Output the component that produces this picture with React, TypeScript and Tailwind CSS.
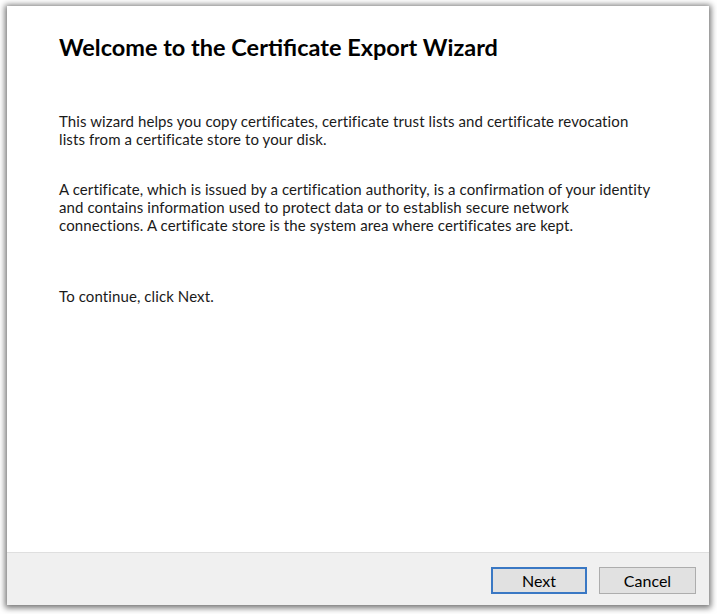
export default function App() {
  return (
    <div className="w-[717px] h-[614px] bg-white pl-[7px] pt-[6px]">
      <div
        className="w-[702px] h-[599px] bg-white flex flex-col shadow-[0_1px_6px_2px_rgba(0,0,0,0.55)] text-[#1a1a1a]"
        style={{ fontFamily: "Lato, 'Liberation Sans', sans-serif" }}
      >
        <div className="flex-1 pl-[52px] pr-[30px]">
          <h1 className="mt-[26px] text-[23.5px] leading-[30px] font-bold text-black">
            Welcome to the Certificate Export Wizard
          </h1>
          <div className="mt-[50px] text-[15px] leading-[18px] tracking-[0.1px] flex flex-col gap-[32px]">
            <p>
              This wizard helps you copy certificates, certificate trust lists and certificate revocation
              <br />
              lists from a certificate store to your disk.
            </p>
            <p>
              A certificate, which is issued by a certification authority, is a confirmation of your identity
              <br />
              and contains information used to protect data or to establish secure network
              <br />
              connections. A certificate store is the system area where certificates are kept.
            </p>
            <p className="mt-[21px]">To continue, click Next.</p>
          </div>
        </div>
        <div className="h-[53px] bg-[#f0f0f0] border-t border-[#dfdfdf] flex justify-end items-start pt-[14px] pr-[13px] gap-[12px]">
          <button className="w-[96px] h-[27px] bg-[#e1e1e1] border-2 border-[#3a78c4] text-[16px] text-black">
            Next
          </button>
          <button className="w-[97px] h-[27px] bg-[#e1e1e1] border border-[#adadad] text-[16px] text-black">
            Cancel
          </button>
        </div>
      </div>
    </div>
  );
}
